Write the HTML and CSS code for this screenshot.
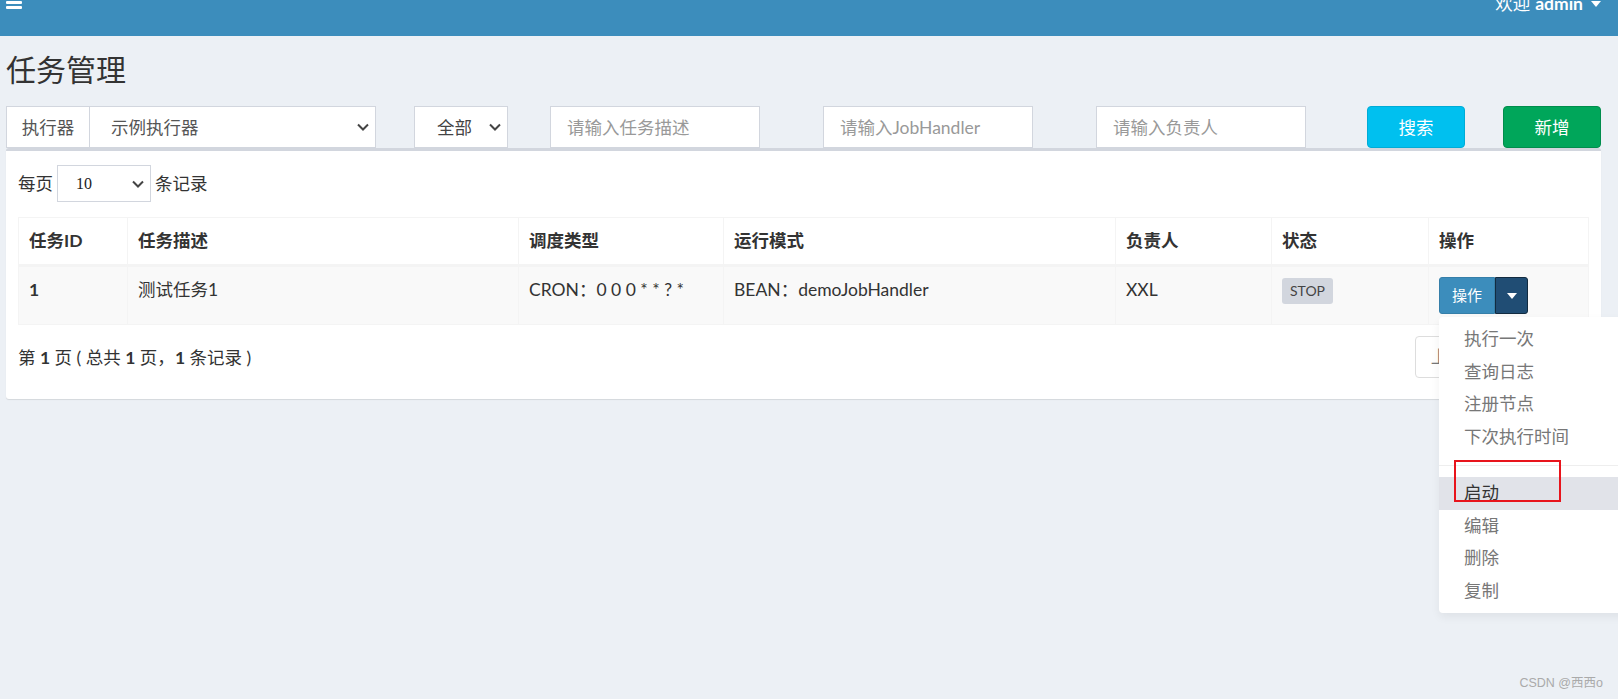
FILE: index.html
```html
<!DOCTYPE html>
<html lang="zh-CN">
<head>
    <meta charset="UTF-8">
    <meta name="viewport" content="width=device-width, initial-scale=1.0">
    <title>任务管理</title>
    <link rel="stylesheet" href="styles.css">
</head>
<body>
    <!-- Header -->
    <div class="main-header">
        <span class="sidebar-toggle"><i></i><i></i></span>
        <span class="user-menu">欢迎 <b>admin</b> <span class="caret"></span></span>
    </div>

    <div class="content">
        <h1 class="page-title">任务管理</h1>

        <!-- Filters -->
        <div class="filter-row">
            <div class="input-group">
                <span class="addon">执行器</span>
                <div class="select select-group">
                    <span>示例执行器</span>
                    <svg class="chevron" width="12" height="8" viewBox="0 0 12 8"><path d="M1 1.5l5 5 5-5" fill="none" stroke="#444" stroke-width="2"/></svg>
                </div>
            </div>
            <div class="select select-status">
                <span>全部</span>
                <svg class="chevron" width="12" height="8" viewBox="0 0 12 8"><path d="M1 1.5l5 5 5-5" fill="none" stroke="#444" stroke-width="2"/></svg>
            </div>
            <input type="text" class="form-control input-desc" placeholder="请输入任务描述">
            <input type="text" class="form-control input-handler" placeholder="请输入JobHandler">
            <input type="text" class="form-control input-author" placeholder="请输入负责人">
            <button class="btn btn-info btn-search">搜索</button>
            <button class="btn btn-success btn-add">新增</button>
        </div>

        <!-- Job list -->
        <div class="box">
            <div class="length-row">
                <span>每页</span>
                <div class="length-select">
                    <span>10</span>
                    <svg class="chevron" width="12" height="8" viewBox="0 0 12 8"><path d="M1 1.5l5 5 5-5" fill="none" stroke="#444" stroke-width="2"/></svg>
                </div>
                <span>条记录</span>
            </div>

            <table class="job-table">
                <colgroup>
                    <col style="width:109px">
                    <col style="width:391px">
                    <col style="width:205px">
                    <col style="width:392px">
                    <col style="width:156px">
                    <col style="width:157px">
                    <col>
                </colgroup>
                <thead>
                    <tr>
                        <th>任务ID</th>
                        <th>任务描述</th>
                        <th>调度类型</th>
                        <th>运行模式</th>
                        <th>负责人</th>
                        <th>状态</th>
                        <th>操作</th>
                    </tr>
                </thead>
                <tbody>
                    <tr>
                        <td><b>1</b></td>
                        <td>测试任务1</td>
                        <td>CRON：0 0 0 * * ? *</td>
                        <td>BEAN：demoJobHandler</td>
                        <td>XXL</td>
                        <td><span class="label">STOP</span></td>
                        <td>
                            <div class="btn-group">
                                <button class="btn-op">操作</button>
                                <button class="btn-toggle"><span class="caret"></span></button>
                                <ul class="dropdown-menu">
                                    <li><a>执行一次</a></li>
                                    <li><a>查询日志</a></li>
                                    <li><a>注册节点</a></li>
                                    <li><a>下次执行时间</a></li>
                                    <li class="divider"></li>
                                    <li class="hover"><a>启动</a></li>
                                    <li><a>编辑</a></li>
                                    <li><a>删除</a></li>
                                    <li><a>复制</a></li>
                                    <span class="mark"></span>
                                </ul>
                            </div>
                        </td>
                    </tr>
                </tbody>
            </table>

            <div class="info-row">
                <span>第 <b>1</b> 页 ( 总共 <b>1</b> 页，<b>1</b> 条记录 )</span>
                <ul class="pagination">
                    <li class="disabled">上页</li>
                    <li class="active">1</li>
                    <li class="disabled">下页</li>
                </ul>
            </div>
        </div>
    </div>

    <div class="watermark">CSDN @西西o</div>
</body>
</html>
```

FILE: styles.css
```css
* {
    margin: 0;
    padding: 0;
    box-sizing: border-box;
}
html, body {
    height: 100%;
    overflow: hidden;
}
body {
    background: #ecf0f5;
    font-family: Lato, "Noto Sans CJK SC", sans-serif;
    font-size: 17.5px;
    line-height: 25px;
    color: #333;
    position: relative;
}
/* Header */
.main-header {
    height: 36px;
    background: #3c8dbc;
    color: #fff;
    display: flex;
    justify-content: space-between;
    align-items: flex-start;
    padding: 0 17px 0 6px;
    overflow: hidden;
}
.sidebar-toggle {
    display: flex;
    flex-direction: column;
    gap: 2px;
    width: 16px;
    margin-top: 1px;
}
.sidebar-toggle i {
    display: block;
    height: 3px;
    background: #fff;
    border-radius: 1px;
}
.user-menu {
    margin-top: -9px;
    display: flex;
    align-items: center;
    gap: 5px;
}
.user-menu .caret {
    margin-left: 3px;
}
.caret {
    display: inline-block;
    width: 0;
    height: 0;
    border-top: 6px solid #fff;
    border-left: 5px solid transparent;
    border-right: 5px solid transparent;
}
/* Content */
.content {
    padding: 0 17px 0 6px;
}
.page-title {
    font-size: 30px;
    line-height: 33px;
    font-weight: 400;
    margin: 17px 0 20px;
}
/* Filters */
.filter-row {
    display: flex;
    height: 42px;
}
.input-group {
    display: flex;
    width: 370px;
}
.addon {
    width: 84px;
    border: 1px solid #d2d6de;
    background: #fff;
    color: #555;
    display: flex;
    align-items: center;
    justify-content: center;
}
.select {
    background: #fff;
    border: 1px solid #d2d6de;
    display: flex;
    align-items: center;
    justify-content: space-between;
    color: #555;
}
.select-group {
    flex: 1;
    border-left: none;
    padding: 0 6px 0 21px;
}
.select-status {
    width: 94px;
    margin-left: 38px;
    padding: 0 6px 0 22px;
    color: #444;
}
.form-control {
    width: 210px;
    height: 42px;
    border: 1px solid #d2d6de;
    background: #fff;
    padding: 0 16px;
    font: inherit;
    color: #555;
    outline: none;
}
.form-control::placeholder {
    color: #999;
}
.input-desc {
    margin-left: 42px;
}
.input-handler,
.input-author {
    margin-left: 63px;
}
.btn {
    width: 98px;
    height: 42px;
    border: 1px solid;
    border-radius: 4px;
    color: #fff;
    font: inherit;
}
.btn-info {
    background: #00c0ef;
    border-color: #00acd6;
}
.btn-success {
    background: #00a65a;
    border-color: #008d4c;
}
.btn-search {
    margin-left: 61px;
}
.btn-add {
    margin-left: 38px;
}
/* Box */
.box {
    background: #fff;
    border-top: 3px solid #d2d6de;
    border-radius: 3px;
    box-shadow: 0 1px 1px rgba(0, 0, 0, 0.1);
    padding: 14px 12px 21px;
}
.length-row {
    display: flex;
    align-items: center;
    height: 37px;
}
.length-select {
    width: 94px;
    height: 37px;
    margin: 0 4px;
    border: 1px solid #d2d6de;
    display: flex;
    align-items: center;
    justify-content: space-between;
    padding: 0 6px 0 18px;
    font-family: "Liberation Serif", serif;
    font-size: 16px;
    color: #222;
}
/* Table */
.job-table {
    width: 100%;
    margin-top: 15px;
    border-collapse: collapse;
    table-layout: fixed;
}
.job-table th,
.job-table td {
    border: 1px solid #f4f4f4;
    padding: 10px;
    text-align: left;
    vertical-align: top;
}
.job-table th {
    font-weight: 700;
    padding-bottom: 11px;
    border-bottom-width: 3px;
}
.job-table td {
    background: #f9f9f9;
}
.label {
    display: inline-block;
    height: 26px;
    line-height: 26px;
    padding: 0 8px;
    background: #d2d6de;
    color: #444;
    font-size: 14px;
    border-radius: 3px;
}
.btn-group {
    position: relative;
    display: inline-flex;
    vertical-align: top;
}
.btn-op {
    width: 56px;
    height: 37px;
    background: #3c8dbc;
    border: 1px solid #367fa9;
    border-radius: 3px 0 0 3px;
    color: #fff;
    font: inherit;
    font-size: 15px;
}
.btn-toggle {
    width: 33px;
    height: 37px;
    background: #204d74;
    border: 1px solid #122b40;
    border-radius: 0 3px 3px 0;
    display: flex;
    align-items: center;
    justify-content: center;
}
/* Dropdown */
.dropdown-menu {
    position: absolute;
    top: 40px;
    left: 0;
    width: 200px;
    list-style: none;
    background: #fff;
    padding: 6px 0;
    border-radius: 4px;
    box-shadow: 0 4px 10px rgba(0, 0, 0, 0.06);
    z-index: 10;
}
.dropdown-menu li a {
    display: block;
    padding: 0 25px;
    line-height: 32.5px;
    color: #777;
    white-space: nowrap;
}
.dropdown-menu li.hover a {
    background: #e1e3e9;
    color: #333;
}
.dropdown-menu .divider {
    height: 1px;
    margin: 11.5px 0;
    background: #eee;
}
.mark {
    position: absolute;
    left: 15px;
    top: 143px;
    width: 107px;
    height: 42px;
    border: 2px solid #e8141c;
}
/* Info row */
.info-row {
    display: flex;
    justify-content: space-between;
    align-items: center;
    height: 42px;
    margin-top: 11px;
}
.pagination {
    display: flex;
    list-style: none;
}
.pagination li {
    border: 1px solid #ddd;
    margin-left: -1px;
    padding: 0 15px;
    line-height: 40px;
    color: #777;
    background: #fff;
}
.pagination li:first-child {
    border-radius: 4px 0 0 4px;
}
.pagination li:last-child {
    border-radius: 0 4px 4px 0;
}
.pagination li.active {
    background: #337ab7;
    border-color: #337ab7;
    color: #fff;
}
.watermark {
    position: absolute;
    right: 15px;
    bottom: 9px;
    font-family: "Liberation Sans", "Noto Sans CJK SC", sans-serif;
    font-size: 12.5px;
    line-height: 14px;
    color: #aaa;
}
```
